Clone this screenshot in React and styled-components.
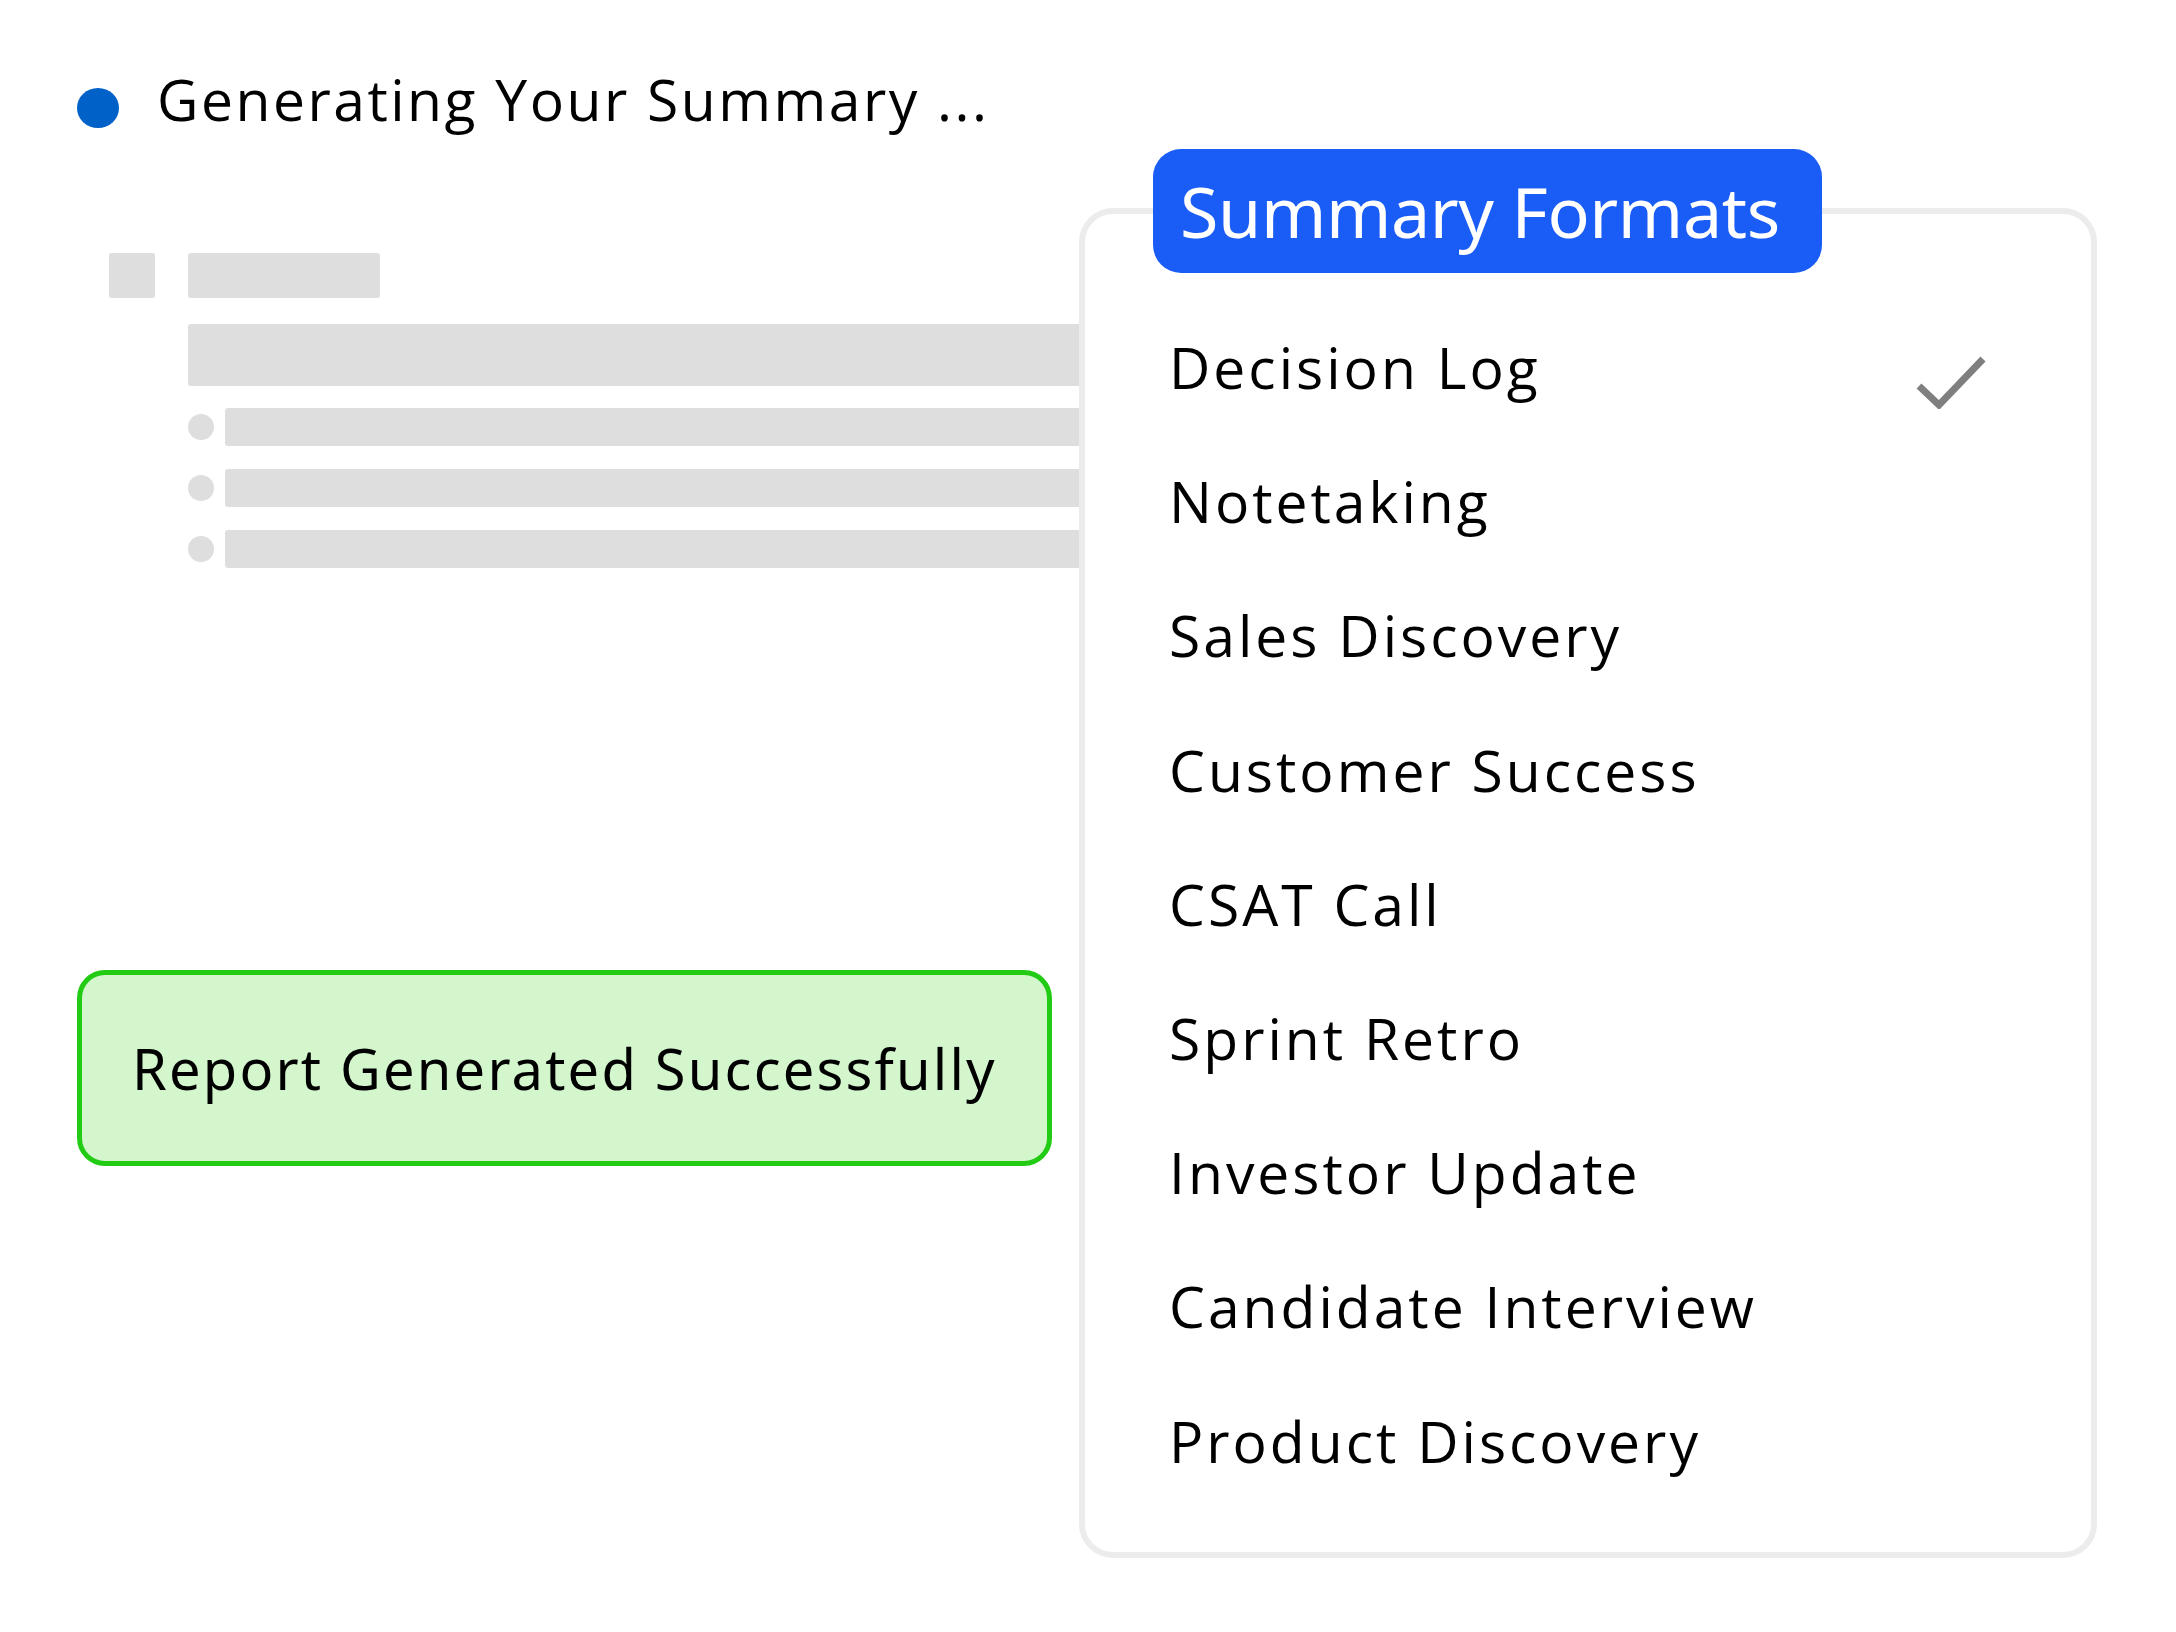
import React from "react";
import styled, { createGlobalStyle } from "styled-components";

const GlobalStyle = createGlobalStyle`
  html, body {
    margin: 0;
    padding: 0;
    background: #ffffff;
  }
  body {
    font-family: "Open Sans", "Noto Sans", sans-serif;
    color: #000000;
  }
  * { box-sizing: border-box; }
`;

const Page = styled.main`
  display: flex;
  align-items: flex-start;
  width: 2176px;
  min-height: 1632px;
  padding-left: 77px;
`;

const LeftColumn = styled.section`
  width: 1002px;
  flex-shrink: 0;
  padding-top: 59px;
  display: flex;
  flex-direction: column;
`;

const StatusRow = styled.div`
  display: flex;
  align-items: flex-start;
  gap: 38px;
`;

const StatusDot = styled.span`
  width: 42px;
  height: 40px;
  margin-top: 29px;
  border-radius: 50%;
  background: #0062c9;
  flex-shrink: 0;
`;

const StatusText = styled.h1`
  margin: 0;
  font-family: "Open Sans", sans-serif;
  font-weight: 400;
  font-size: 57px;
  line-height: 80px;
  letter-spacing: 2.5px;
  white-space: nowrap;
`;

const SkeletonHead = styled.div`
  display: flex;
  gap: 33px;
  margin-top: 114px;
  margin-left: 32px;
`;

const Block = styled.div`
  width: ${(p) => p.$w}px;
  height: ${(p) => p.$h}px;
  background: #dedede;
  border-radius: 3px;
`;

const WideBar = styled.div`
  height: 62px;
  margin: 26px 0 0 111px;
  background: #dedede;
  border-radius: 3px 0 0 3px;
`;

const BulletList = styled.ul`
  list-style: none;
  margin: 22px 0 0 111px;
  padding: 0;
  display: flex;
  flex-direction: column;
  gap: 23px;
`;

const BulletRow = styled.li`
  display: flex;
  align-items: center;
  gap: 11px;
`;

const BulletDot = styled.span`
  width: 26px;
  height: 26px;
  border-radius: 50%;
  background: #dedede;
  flex-shrink: 0;
`;

const BulletBar = styled.span`
  flex: 1;
  height: 38px;
  background: #dedede;
  border-radius: 3px 0 0 3px;
`;

const SuccessBox = styled.div`
  width: 975px;
  height: 196px;
  margin-top: 402px;
  display: flex;
  align-items: center;
  padding-left: 50px;
  background: #d3f6cd;
  border: 5px solid #22cc14;
  border-radius: 28px;
  font-family: "Noto Sans", sans-serif;
  font-size: 56px;
  letter-spacing: 2.2px;
  color: #000000;
  white-space: nowrap;
`;

const Panel = styled.section`
  position: relative;
  width: 1018px;
  height: 1350px;
  margin-top: 208px;
  flex-shrink: 0;
  border: 6px solid #ececec;
  border-radius: 34px;
  background: #ffffff;
  padding: 86px 104px 0 84px;
`;

const PanelBadge = styled.h2`
  position: absolute;
  top: -65px;
  left: 68px;
  width: 669px;
  height: 124px;
  margin: 0;
  display: flex;
  align-items: center;
  padding-left: 27px;
  background: #1a5cf6;
  border-radius: 28px;
  color: #ffffff;
  font-family: "Noto Sans", sans-serif;
  font-weight: 400;
  font-size: 70px;
  letter-spacing: -0.4px;
  white-space: nowrap;
`;

const FormatList = styled.ul`
  list-style: none;
  margin: 0;
  padding: 0;
  display: flex;
  flex-direction: column;
`;

const FormatItem = styled.li`
  display: flex;
  align-items: center;
  justify-content: space-between;
  height: 134.2px;
  font-family: "Open Sans", sans-serif;
  font-size: 57px;
  line-height: 134px;
  letter-spacing: 3px;
  white-space: nowrap;
`;

const CheckMark = styled.svg`
  width: 72px;
  height: 54px;
  margin-top: 29px;
  flex-shrink: 0;
`;

const formats = [
  "Decision Log",
  "Notetaking",
  "Sales Discovery",
  "Customer Success",
  "CSAT Call",
  "Sprint Retro",
  "Investor Update",
  "Candidate Interview",
  "Product Discovery",
];

const selectedFormat = "Decision Log";

export default function App() {
  return (
    <>
      <GlobalStyle />
      <Page>
        <LeftColumn>
          <StatusRow>
            <StatusDot />
            <StatusText>Generating Your Summary ...</StatusText>
          </StatusRow>

          <SkeletonHead>
            <Block $w={46} $h={45} />
            <Block $w={192} $h={45} />
          </SkeletonHead>
          <WideBar />
          <BulletList>
            {[0, 1, 2].map((i) => (
              <BulletRow key={i}>
                <BulletDot />
                <BulletBar />
              </BulletRow>
            ))}
          </BulletList>

          <SuccessBox>Report Generated Successfully</SuccessBox>
        </LeftColumn>

        <Panel>
          <PanelBadge>Summary Formats</PanelBadge>
          <FormatList>
            {formats.map((name) => (
              <FormatItem key={name}>
                <span>{name}</span>
                {name === selectedFormat && (
                  <CheckMark viewBox="0 0 72 54" fill="none">
                    <polyline
                      points="4,31 24,50 68,4"
                      stroke="#7f7f7f"
                      strokeWidth="7"
                    />
                  </CheckMark>
                )}
              </FormatItem>
            ))}
          </FormatList>
        </Panel>
      </Page>
    </>
  );
}
